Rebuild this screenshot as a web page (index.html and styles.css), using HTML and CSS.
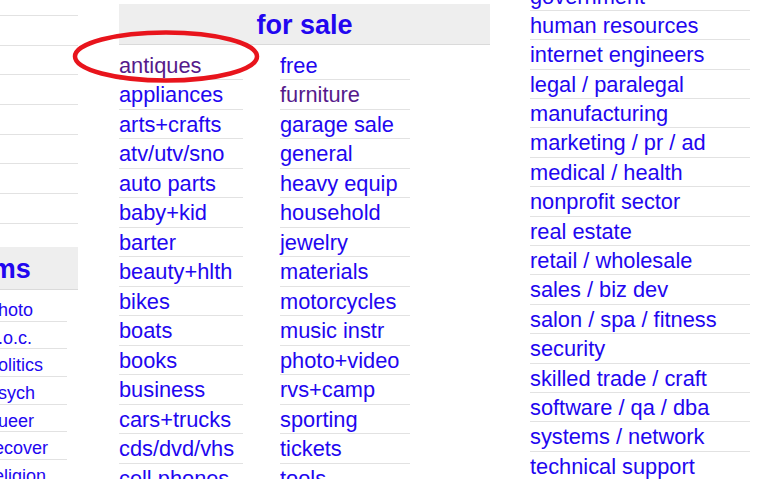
FILE: index.html
```html
<!DOCTYPE html>
<html>
<head>
<meta charset="utf-8">
<link rel="stylesheet" href="styles.css">
</head>
<body>
<div class="page">
  <div class="col col-left">
    <ul class="list list-community">
      <li></li><li></li><li></li><li></li><li></li><li></li><li></li><li></li>
    </ul>
    <h3 class="ban ban-forums"><a href="#">forums</a></h3>
    <ul class="list list-forums">
      <li><a href="#">photo</a></li>
      <li><a href="#">p.o.c.</a></li>
      <li><a href="#">politics</a></li>
      <li><a href="#">psych</a></li>
      <li><a href="#">queer</a></li>
      <li><a href="#">recover</a></li>
      <li><a href="#">religion</a></li>
    </ul>
  </div>

  <div class="col col-sale">
    <h3 class="ban"><a href="#">for sale</a></h3>
    <div class="sub-cols">
      <ul class="list list-a">
        <li><a class="visited" href="#">antiques</a></li>
        <li><a href="#">appliances</a></li>
        <li><a href="#">arts+crafts</a></li>
        <li><a href="#">atv/utv/sno</a></li>
        <li><a href="#">auto parts</a></li>
        <li><a href="#">baby+kid</a></li>
        <li><a href="#">barter</a></li>
        <li><a href="#">beauty+hlth</a></li>
        <li><a href="#">bikes</a></li>
        <li><a href="#">boats</a></li>
        <li><a href="#">books</a></li>
        <li><a href="#">business</a></li>
        <li><a href="#">cars+trucks</a></li>
        <li><a href="#">cds/dvd/vhs</a></li>
        <li><a href="#">cell phones</a></li>
      </ul>
      <ul class="list list-b">
        <li><a href="#">free</a></li>
        <li><a class="visited" href="#">furniture</a></li>
        <li><a href="#">garage sale</a></li>
        <li><a href="#">general</a></li>
        <li><a href="#">heavy equip</a></li>
        <li><a href="#">household</a></li>
        <li><a href="#">jewelry</a></li>
        <li><a href="#">materials</a></li>
        <li><a href="#">motorcycles</a></li>
        <li><a href="#">music instr</a></li>
        <li><a href="#">photo+video</a></li>
        <li><a href="#">rvs+camp</a></li>
        <li><a href="#">sporting</a></li>
        <li><a href="#">tickets</a></li>
        <li><a href="#">tools</a></li>
      </ul>
    </div>
  </div>

  <div class="col col-jobs">
    <ul class="list list-jobs">
      <li><a href="#">government</a></li>
      <li><a href="#">human resources</a></li>
      <li><a href="#">internet engineers</a></li>
      <li><a href="#">legal / paralegal</a></li>
      <li><a href="#">manufacturing</a></li>
      <li><a href="#">marketing / pr / ad</a></li>
      <li><a href="#">medical / health</a></li>
      <li><a href="#">nonprofit sector</a></li>
      <li><a href="#">real estate</a></li>
      <li><a href="#">retail / wholesale</a></li>
      <li><a href="#">sales / biz dev</a></li>
      <li><a href="#">salon / spa / fitness</a></li>
      <li><a href="#">security</a></li>
      <li><a href="#">skilled trade / craft</a></li>
      <li><a href="#">software / qa / dba</a></li>
      <li><a href="#">systems / network</a></li>
      <li><a href="#">technical support</a></li>
    </ul>
  </div>
</div>
<svg class="circle" width="780" height="479" viewBox="0 0 780 479">
  <ellipse cx="166" cy="56.5" rx="91" ry="24" fill="none" stroke="#e8141c" stroke-width="4.5"/>
</svg>
</body>
</html>
```

FILE: styles.css
```css
html, body {
  margin: 0;
  padding: 0;
  background: #fff;
}
body {
  position: relative;
  width: 780px;
  height: 479px;
  overflow: hidden;
  font-family: "Liberation Sans", Arial, Helvetica, sans-serif;
}
a {
  color: #2206f0;
  text-decoration: none;
}
a.visited {
  color: #551a8b;
}
.page {
  display: flex;
  align-items: flex-start;
}
.col {
  flex: none;
}
.list {
  list-style: none;
  margin: 0;
  padding: 0;
}
.list li {
  height: 28.5px;
  line-height: 29px;
  border-bottom: 1px solid #e2e2e2;
  font-size: 21.8px;
  white-space: nowrap;
}
.ban {
  margin: 0;
  height: 40px;
  line-height: 43px;
  background: #eeeeee;
  border-bottom: 1px solid #dadada;
  text-align: center;
  font-size: 27px;
  font-weight: bold;
}

/* left column */
.col-left {
  width: 186px;
  margin-left: -108px;
}
.list-community {
  margin-top: -13.7px;
}
.list-community li {
  height: 28.7px;
}
.ban-forums {
  margin-top: 23px;
  height: 42px;
  line-height: 44px;
}
.list-forums {
  margin: 4px 0 0 96px;
  width: 79px;
}
.list-forums li {
  height: 26.7px;
  line-height: 33px;
  font-size: 18px;
}

/* for sale */
.col-sale {
  width: 371px;
  margin-left: 41px;
  margin-top: 4px;
}
.sub-cols {
  display: grid;
  grid-template-columns: 124px 130px;
  column-gap: 37px;
  margin-top: 5.5px;
}

/* jobs */
.col-jobs {
  width: 220px;
  margin-left: 40px;
  margin-top: -18.5px;
}
.list-jobs li {
  height: 28.4px;
}

.circle {
  position: absolute;
  left: 0;
  top: 0;
  pointer-events: none;
}
```
